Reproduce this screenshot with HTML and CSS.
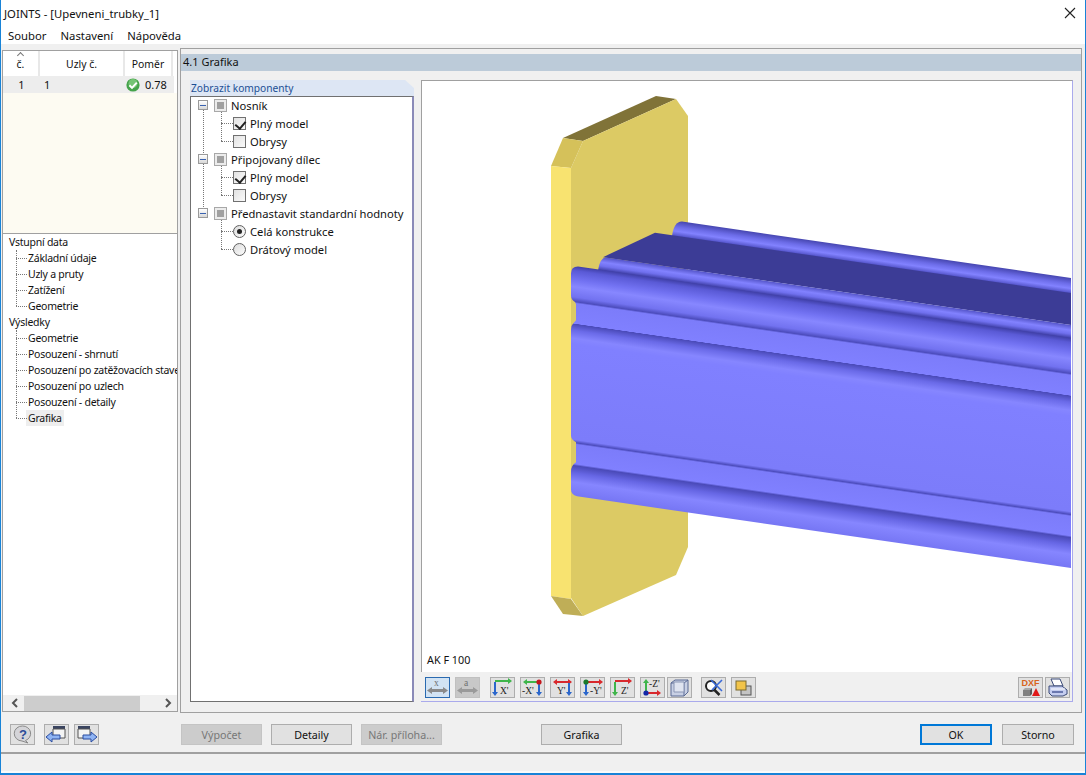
FILE: index.html
```html
<!DOCTYPE html>
<html lang="en">
<head>
    <meta charset="UTF-8">
    <meta name="viewport" content="width=device-width, initial-scale=1.0">
    <title>JOINTS</title>
    <link rel="stylesheet" href="styles.css">
</head>
<body>
    <div class="window">
        <div class="titlebar">
            <span>JOINTS - [Upevneni_trubky_1]</span>
            <svg class="close-icon" width="12" height="12" viewBox="0 0 12 12"><path d="M1 1l10 10M11 1L1 11" stroke="#222" stroke-width="1.1" fill="none"/></svg>
        </div>
        <div class="menubar">
            <span>Soubor</span>
            <span>Nastavení</span>
            <span>Nápověda</span>
        </div>

        <div class="workspace">
            <div class="side">
                <div class="results">
                    <div class="results-head">
                        <div class="cell cell-no">č.<i class="sort-mark"></i></div>
                        <div class="cell cell-nodes">Uzly č.</div>
                        <div class="cell cell-ratio">Poměr</div>
                    </div>
                    <div class="results-row">
                        <div class="cell cell-no">1</div>
                        <div class="cell cell-nodes cell-left">1</div>
                        <div class="cell cell-ratio">
                            <svg width="14" height="14" viewBox="0 0 14 14"><circle cx="7" cy="7" r="6.6" fill="#45a34b"/><circle cx="7" cy="5.5" r="4.5" fill="#74c474"/><path d="M3.4 7.2l2.6 2.7 4.8-5.3" stroke="#fff" stroke-width="2" fill="none"/></svg>
                            <span>0.78</span>
                        </div>
                    </div>
                </div>

                <div class="nav-tree">
                    <div class="nav-root">Vstupní data</div>
                    <div class="nav-group">
                        <div class="nav-item">Základní údaje</div>
                        <div class="nav-item">Uzly a pruty</div>
                        <div class="nav-item">Zatížení</div>
                        <div class="nav-item">Geometrie</div>
                    </div>
                    <div class="nav-root">Výsledky</div>
                    <div class="nav-group">
                        <div class="nav-item">Geometrie</div>
                        <div class="nav-item">Posouzení - shrnutí</div>
                        <div class="nav-item">Posouzení po zatěžovacích stavech</div>
                        <div class="nav-item">Posouzení po uzlech</div>
                        <div class="nav-item">Posouzení - detaily</div>
                        <div class="nav-item"><span class="nav-selected">Grafika</span></div>
                    </div>
                </div>

                <div class="hscroll">
                    <svg width="8" height="10" viewBox="0 0 8 10"><path d="M6 1L2 5l4 4" stroke="#555" stroke-width="2" fill="none"/></svg>
                    <div class="hscroll-track"><div class="hscroll-thumb"></div></div>
                    <svg width="8" height="10" viewBox="0 0 8 10"><path d="M2 1l4 4-4 4" stroke="#555" stroke-width="2" fill="none"/></svg>
                </div>
            </div>

            <div class="main">
                <div class="main-head">4.1 Grafika</div>
                <div class="main-body">
                    <div class="group">
                        <div class="group-tab">Zobrazit komponenty</div>
                        <div class="group-box">
                            <div class="comp-node">
                                <div class="comp-root"><i class="expander"></i><i class="tri-box"></i>Nosník</div>
                                <div class="comp-children">
                                    <div class="comp-item"><i class="check-box checked"></i>Plný model</div>
                                    <div class="comp-item"><i class="check-box"></i>Obrysy</div>
                                </div>
                            </div>
                            <div class="comp-node">
                                <div class="comp-root"><i class="expander"></i><i class="tri-box"></i>Připojovaný dílec</div>
                                <div class="comp-children">
                                    <div class="comp-item"><i class="check-box checked"></i>Plný model</div>
                                    <div class="comp-item"><i class="check-box"></i>Obrysy</div>
                                </div>
                            </div>
                            <div class="comp-node comp-last">
                                <div class="comp-root"><i class="expander"></i><i class="tri-box"></i>Přednastavit standardní hodnoty</div>
                                <div class="comp-children">
                                    <div class="comp-item"><i class="radio selected"></i>Celá konstrukce</div>
                                    <div class="comp-item"><i class="radio"></i>Drátový model</div>
                                </div>
                            </div>
                        </div>
                    </div>

                    <div class="view">
                        <svg class="model" width="650" height="570" viewBox="422 81 650 570">
                            <defs>
                                <linearGradient id="beam-front" gradientUnits="userSpaceOnUse" x1="0" y1="338" x2="0" y2="568">
                                    <stop offset="0" stop-color="#4040a8"/>
                                    <stop offset="0.02" stop-color="#5a5ad6"/>
                                    <stop offset="0.06" stop-color="#7272f2"/>
                                    <stop offset="0.09" stop-color="#8787ff"/>
                                    <stop offset="0.135" stop-color="#7272f0"/>
                                    <stop offset="0.155" stop-color="#4c4cbc"/>
                                    <stop offset="0.162" stop-color="#7c7cfa"/>
                                    <stop offset="0.25" stop-color="#8080ff"/>
                                    <stop offset="0.252" stop-color="#4a4ab8"/>
                                    <stop offset="0.28" stop-color="#6a6ae8"/>
                                    <stop offset="0.315" stop-color="#8686ff"/>
                                    <stop offset="0.34" stop-color="#8080ff"/>
                                    <stop offset="0.755" stop-color="#7c7cfa"/>
                                    <stop offset="0.768" stop-color="#4c4cbc"/>
                                    <stop offset="0.775" stop-color="#7c7cfa"/>
                                    <stop offset="0.86" stop-color="#8080ff"/>
                                    <stop offset="0.868" stop-color="#4a4ab8"/>
                                    <stop offset="0.9" stop-color="#6666e4"/>
                                    <stop offset="0.94" stop-color="#8686ff"/>
                                    <stop offset="1" stop-color="#7676f4"/>
                                </linearGradient>
                                <linearGradient id="beam-mid" gradientUnits="userSpaceOnUse" x1="0" y1="325" x2="0" y2="338">
                                    <stop offset="0" stop-color="#5454c8"/>
                                    <stop offset="0.4" stop-color="#8282ff"/>
                                    <stop offset="0.7" stop-color="#7070ee"/>
                                    <stop offset="1" stop-color="#4444ae"/>
                                </linearGradient>
                                <linearGradient id="beam-top" gradientUnits="userSpaceOnUse" x1="0" y1="278" x2="0" y2="293">
                                    <stop offset="0" stop-color="#4646b0"/>
                                    <stop offset="0.4" stop-color="#6c6ce8"/>
                                    <stop offset="0.7" stop-color="#8282ff"/>
                                    <stop offset="1" stop-color="#5656cc"/>
                                </linearGradient>
                            </defs>
                            <polygon points="563,138 656,96 676,99 583,141" fill="#807338"/>
                            <polygon points="583,141 676,99 688,116 688,547 676,575 583,616 571,598 571,168" fill="#dcca64"/>
                            <polygon points="563,138 583,141 571,168 551,166" fill="#d5c15a"/>
                            <polygon points="551,166 571,168 571,599 551,596" fill="#f8e370"/>
                            <polygon points="551,596 571,599 583,616 563,614" fill="#bfae57"/>
                            <g transform="matrix(1 .145 0 1 0 -155.3)">
                                <path d="M1071 278H682Q674 279 672 294H1071Z" fill="url(#beam-top)"/>
                                <path d="M1071 293H655L603 325H1071Z" fill="#3c3c96"/>
                                <path d="M1071 325H606Q600 326 598 339H1071Z" fill="url(#beam-mid)"/>
                                <path d="M1071 338H578Q571 339 571 346V368Q571 372 575 374L576 376V392L573 396Q571 398 571 402V508Q571 512 576 514V534Q571 538 571 544V562Q571 567 577 568H1071Z" fill="url(#beam-front)"/>
                            </g>
                        </svg>
                        <div class="view-label">AK F 100</div>
                        <div class="view-tools">
                            <button class="tool tool-active"><svg width="23" height="19" viewBox="0 0 23 19"><text x="8" y="8" class="tool-letter">x</text><path d="M3 12.5h17" stroke="#8a8a8a" stroke-width="3"/><path d="M1 12.5l5-3.5v7zM22 12.5l-5-3.5v7z" fill="#8a8a8a"/></svg></button>
                            <button class="tool tool-disabled"><svg width="23" height="19" viewBox="0 0 23 19"><text x="8" y="8" class="tool-letter">a</text><path d="M3 12.5h17" stroke="#9a9a9a" stroke-width="3"/><path d="M1 12.5l5-3.5v7zM22 12.5l-5-3.5v7z" fill="#9a9a9a"/></svg></button>
                            <span class="tool-gap"></span>
                            <button class="tool"><svg width="23" height="19" viewBox="0 0 23 19"><path d="M4 4v11" stroke="#2a66cc" stroke-width="2"/><path d="M1 14h6l-3 4z" fill="#2a66cc"/><path d="M4 3h14" stroke="#3fb54a" stroke-width="2"/><path d="M17 0v6l4-3z" fill="#3fb54a"/><text x="9" y="16" class="tool-letter">X'</text></svg></button>
                            <button class="tool"><svg width="23" height="19" viewBox="0 0 23 19"><path d="M18 4v11" stroke="#2a66cc" stroke-width="2"/><path d="M15 14h6l-3 4z" fill="#2a66cc"/><path d="M5 4h13" stroke="#3fb54a" stroke-width="2"/><path d="M6 1v6l-4-3z" fill="#3fb54a"/><circle cx="18" cy="4" r="2.6" fill="#c4161c"/><text x="1" y="16" class="tool-letter">-X'</text></svg></button>
                            <button class="tool"><svg width="23" height="19" viewBox="0 0 23 19"><path d="M4 4h15" stroke="#d8282c" stroke-width="2"/><path d="M6 1v6l-4-3zM17 1v6l4-3z" fill="#d8282c"/><path d="M18 5v10" stroke="#2a66cc" stroke-width="2"/><path d="M15 14h6l-3 4z" fill="#2a66cc"/><text x="6" y="16" class="tool-letter">Y'</text></svg></button>
                            <button class="tool"><svg width="23" height="19" viewBox="0 0 23 19"><path d="M5 4v11" stroke="#2a66cc" stroke-width="2"/><path d="M2 14h6l-3 4z" fill="#2a66cc"/><path d="M5 4h14" stroke="#d8282c" stroke-width="2"/><path d="M18 1v6l4-3z" fill="#d8282c"/><circle cx="5" cy="4" r="2.6" fill="#1a7a2a"/><text x="9" y="16" class="tool-letter">-Y'</text></svg></button>
                            <button class="tool"><svg width="23" height="19" viewBox="0 0 23 19"><path d="M4 4v11" stroke="#3fb54a" stroke-width="2"/><path d="M1 14h6l-3 4z" fill="#3fb54a"/><path d="M4 3h14" stroke="#d8282c" stroke-width="2"/><path d="M17 0v6l4-3z" fill="#d8282c"/><text x="10" y="16" class="tool-letter">Z'</text></svg></button>
                            <button class="tool"><svg width="23" height="19" viewBox="0 0 23 19"><path d="M5 4v11" stroke="#3fb54a" stroke-width="2"/><path d="M2 5h6l-3-4z" fill="#3fb54a"/><path d="M5 15h12" stroke="#d8282c" stroke-width="2"/><path d="M16 12v6l4-3z" fill="#d8282c"/><circle cx="5" cy="15" r="2.6" fill="#1226a8"/><text x="8" y="9" class="tool-letter">-Z'</text></svg></button>
                            <button class="tool tool-iso"><svg width="23" height="19" viewBox="0 0 23 19"><path d="M3 5l4-3h13v12l-4 4H3zM3 5h13v13M16 5l4-3" fill="#c8d0e4" stroke="#5a6a94"/><path d="M6 4h10v10H6z" fill="#dfe4f0" stroke="#8a96b4"/></svg></button>
                            <span class="tool-gap"></span>
                            <button class="tool"><svg width="23" height="19" viewBox="0 0 23 19"><circle cx="9" cy="8" r="5" fill="#fff" stroke="#222" stroke-width="2"/><path d="M12.5 12l5 5" stroke="#222" stroke-width="2.5"/><path d="M9 2l11 11M20 2L10 12" stroke="#3a6ad8" stroke-width="1.6"/></svg></button>
                            <button class="tool"><svg width="23" height="19" viewBox="0 0 23 19"><rect x="9" y="8" width="10" height="9" fill="#c4c4c4" stroke="#555"/><rect x="4" y="3" width="10" height="9" fill="#f2c44a" stroke="#7a6a30"/></svg></button>
                            <span class="tool-spacer"></span>
                            <button class="tool tool-dxf"><span>DXF</span><svg width="21" height="8" viewBox="0 0 21 8"><path d="M3 2h7v6H3z" fill="#808080"/><path d="M3 2l2-2h7l-2 2z" fill="#a8a8a8"/><path d="M10 2l2-2v6l-2 2z" fill="#5a5a5a"/><path d="M16 0l4 8h-8z" fill="#e01818"/></svg></button>
                            <button class="tool"><svg width="23" height="19" viewBox="0 0 23 19"><path d="M5 1h9l3 7H8z" fill="#fff" stroke="#3a4a78"/><path d="M3 8h13l5 4v4l-4 2H6l-3-3z" fill="#c4cdf0" stroke="#3a4a78"/><path d="M5 11h14" stroke="#fff"/><path d="M6 14h11" stroke="#6a78b0" stroke-width="2"/></svg></button>
                        </div>
                    </div>
                </div>
            </div>
        </div>

        <div class="footer">
            <button class="btn-icon"><svg width="23" height="19" viewBox="0 0 23 19"><path d="M11.5 1a8 7.5 0 0 1 3 14.5L17 18l-6-2a8 7.5 0 0 1 .5-15z" fill="#d4d4d8" stroke="#8a8a8a"/><text x="8" y="14" class="help-mark">?</text></svg></button>
            <button class="btn-icon btn-prev"><svg width="23" height="19" viewBox="0 0 23 19"><path d="M8 1h12v3H8z" fill="#3a4460"/><path d="M8 4h12v9H8z" fill="#f4f4f4" stroke="#555"/><path d="M1 12l6-5v3h8v4H7v3z" fill="#8fb4f4" stroke="#2a4ca0"/></svg></button>
            <button class="btn-icon btn-next"><svg width="23" height="19" viewBox="0 0 23 19"><path d="M3 1h12v3H3z" fill="#3a4460"/><path d="M3 4h12v9H3z" fill="#f4f4f4" stroke="#555"/><path d="M22 12l-6-5v3H8v4h8v3z" fill="#8fb4f4" stroke="#2a4ca0"/></svg></button>
            <button class="btn btn-disabled btn-calc">Výpočet</button>
            <button class="btn">Detaily</button>
            <button class="btn btn-disabled">Nár. příloha...</button>
            <button class="btn btn-graphics">Grafika</button>
            <button class="btn btn-wide btn-default">OK</button>
            <button class="btn btn-wide">Storno</button>
        </div>
        <div class="statusbar"></div>
    </div>
</body>
</html>
```

FILE: styles.css
```css
:root {
    --line-color: #a0a0a0;
    --edge-color: #aaaaec;
    --face-color: #f0f0f0;
    --window-blue: #1883d7;
}

* {
    box-sizing: border-box;
}

body {
    margin: 0;
    font-family: "Noto Sans", sans-serif;
    font-size: 11px;
    color: #111;
}

.window {
    display: flex;
    flex-direction: column;
    width: 1086px;
    height: 775px;
    background: var(--face-color);
    border: 1px solid var(--window-blue);
    border-top: none;
    border-bottom-width: 2px;
    overflow: hidden;
}

.titlebar {
    display: flex;
    justify-content: space-between;
    align-items: center;
    height: 26px;
    padding: 0 9px 0 3px;
    background: white;
    font-size: 11.3px;
}

.menubar {
    display: flex;
    align-items: center;
    gap: 14px;
    height: 18px;
    padding-left: 7px;
    background: white;
    font-size: 11.3px;
}

.workspace {
    display: flex;
    flex: none;
    height: 669px;
    padding: 4px 0 0 1px;
}

/* left column */
.side {
    display: flex;
    flex-direction: column;
    width: 176px;
    height: 662px;
    margin: 2px 2px 0 0;
    background: white;
    border: 1px solid var(--line-color);
}

.results {
    height: 183px;
    padding-right: 3px;
    border-bottom: 1px solid var(--line-color);
    background: linear-gradient(#fdfbf2, #fdfbf2) no-repeat 0 42px / 100% 100%;
}

.results-head, .results-row {
    display: grid;
    grid-template-columns: 37px 85px 48px;
}

.results-head {
    height: 25px;
    background: white;
    font-size: 10.4px;
}

.results-head .cell {
    position: relative;
    border-right: 2px solid #e8e8e8;
}

.results-row {
    height: 17px;
    background: #ededed;
}

.cell {
    display: flex;
    justify-content: center;
    align-items: center;
}

.cell-left {
    justify-content: flex-start;
    padding-left: 4px;
}

.results-row .cell-ratio {
    justify-content: flex-start;
    gap: 5px;
    padding-left: 1px;
}

.sort-mark {
    position: absolute;
    top: 2px;
    left: 15px;
    width: 5px;
    height: 5px;
    border-top: 1px solid #777;
    border-left: 1px solid #777;
    transform: rotate(45deg);
}

.nav-tree {
    flex: 1;
    min-height: 0;
    padding: 0 0 0 6px;
    font-size: 10.5px;
    letter-spacing: -0.25px;
    white-space: nowrap;
    overflow: hidden;
}

.nav-root, .nav-item {
    display: flex;
    align-items: center;
    height: 16px;
}

.nav-group {
    position: relative;
    padding-left: 19px;
}

.nav-group::before {
    content: "";
    position: absolute;
    top: 0;
    bottom: 8px;
    left: 7px;
    border-left: 1px dotted #777;
}

.nav-item {
    position: relative;
}

.nav-item::before {
    content: "";
    position: absolute;
    top: 8px;
    left: -12px;
    width: 11px;
    border-top: 1px dotted #777;
}

.nav-selected {
    margin-left: -2px;
    padding: 0 2px;
    line-height: 16px;
    background: #eeeeee;
}

.hscroll {
    display: flex;
    align-items: center;
    justify-content: space-between;
    height: 16px;
    padding: 0 5px 0 8px;
    background: var(--face-color);
}

.hscroll-track {
    flex: 1;
    height: 15px;
    padding: 0 24px 0 5px;
}

.hscroll-thumb {
    height: 15px;
    background: #cdcdcd;
}

/* right column */
.main {
    width: 902px;
    height: 665px;
    border: 1px solid var(--line-color);
}

.main-head {
    display: flex;
    align-items: center;
    height: 17px;
    margin-top: 5px;
    padding: 0 0 2px 2px;
    background: #bccbd9;
}

.main-body {
    display: flex;
    gap: 7px;
    padding: 9px 0 0 9px;
}

.group {
    width: 224px;
    height: 622px;
}

.group-tab {
    display: flex;
    align-items: center;
    height: 16px;
    padding-left: 1px;
    background: #dde6f4;
    color: #1c4f94;
    font-size: 10.2px;
    clip-path: polygon(0 0, 96% 0, 100% 50%, 100% 100%, 0 100%);
}

.group-box {
    height: 606px;
    padding-top: 0;
    background: white;
    border: 1px solid #707070;
    border-right: 2px solid #8a8ab8;
    font-size: 11.2px;
}

.comp-node {
    position: relative;
    top: -1px;
}

.comp-node::before {
    content: "";
    position: absolute;
    top: 9px;
    bottom: -9px;
    left: 12px;
    border-left: 1px dotted #777;
}

.comp-last::before {
    display: none;
}

.comp-root, .comp-item {
    position: relative;
    display: flex;
    align-items: center;
    height: 18px;
}

.comp-root {
    padding-left: 7px;
}

.expander {
    position: relative;
    z-index: 1;
    flex: none;
    width: 10px;
    height: 10px;
    margin-right: 6px;
    background: linear-gradient(#ffffff, #d8d8d8);
    border: 1px solid #9a9a9a;
}

.expander::after {
    content: "";
    position: absolute;
    top: 4px;
    left: 1px;
    width: 6px;
    height: 1px;
    background: #3a62b0;
}

.tri-box {
    flex: none;
    width: 13px;
    height: 13px;
    margin-right: 4px;
    background: #a0a0a0;
    border: 1px solid #a8a8a8;
    box-shadow: inset 0 0 0 2px #ececec;
}

.comp-children {
    position: relative;
    margin-left: 30px;
    padding-left: 12px;
}

.comp-children::before {
    content: "";
    position: absolute;
    top: -2px;
    bottom: 9px;
    left: 0;
    border-left: 1px dotted #777;
}

.comp-item::before {
    content: "";
    position: absolute;
    top: 9px;
    left: -12px;
    width: 12px;
    border-top: 1px dotted #777;
}

.check-box {
    position: relative;
    flex: none;
    width: 13px;
    height: 13px;
    margin-right: 4px;
    background: linear-gradient(135deg, #e2e2e2, #fafafa);
    border: 1px solid #707070;
}

.check-box.checked::after {
    content: "";
    position: absolute;
    top: 1px;
    left: 3px;
    width: 5px;
    height: 8px;
    border-right: 2px solid #222;
    border-bottom: 2px solid #222;
    transform: rotate(40deg);
}

.radio {
    position: relative;
    flex: none;
    width: 13px;
    height: 13px;
    margin-right: 4px;
    background: linear-gradient(135deg, #dcdcdc, #fcfcfc);
    border: 1px solid #606060;
    border-radius: 50%;
}

.radio.selected::after {
    content: "";
    position: absolute;
    top: 3px;
    left: 3px;
    width: 5px;
    height: 5px;
    background: #222;
    border-radius: 50%;
}

.view {
    display: flex;
    flex-direction: column;
    width: 652px;
    height: 622px;
    background: white;
    border: 1px solid var(--edge-color);
    border-top-color: var(--line-color);
    border-left: none;
    box-shadow: inset 1px 0 0 var(--line-color);
}

.model {
    display: block;
    flex: none;
    margin-left: 1px;
}

.view-label {
    display: flex;
    align-items: center;
    height: 21px;
    padding: 0 0 4px 6px;
    font-size: 10.8px;
}

.view-tools {
    display: flex;
    gap: 5px;
    height: 29px;
    padding: 5px 0 0 4px;
    background: var(--face-color);
}

.tool {
    display: flex;
    flex: none;
    justify-content: center;
    align-items: center;
    width: 25px;
    height: 21px;
    padding: 0;
    background: #e1e1e1;
    border: 1px solid #adadad;
}

.tool-active {
    background: #d2e3f3;
    border-color: #2a6ab0;
}

.tool-disabled {
    background: #c8c8c8;
    border-color: #c0c0c0;
}

.tool-gap {
    flex: none;
    width: 0;
}

.tool-iso {
    margin-left: -3px;
}

.tool-iso + .tool-gap {
    margin-left: -1px;
}

.tool-spacer {
    flex: 1;
}

.tool-dxf {
    flex-direction: column;
    color: #d8641c;
    font-family: "Liberation Sans", sans-serif;
    font-size: 9px;
    font-weight: bold;
    line-height: 9px;
}

.tool-dxf + .tool {
    margin: 0 2px 0 -3px;
}

.tool-letter {
    font-family: "Liberation Serif", serif;
    font-size: 9.5px;
    fill: #222;
}

.tool-disabled .tool-letter, .tool-active .tool-letter {
    fill: #707070;
}

.help-mark {
    font-family: "Liberation Sans", sans-serif;
    font-size: 13px;
    font-weight: bold;
    fill: #2c4c98;
}

/* buttons along the bottom */
.footer {
    display: flex;
    flex: none;
    align-items: flex-start;
    height: 39px;
    padding: 11px 0 0 9px;
}

.btn-icon {
    display: flex;
    justify-content: center;
    align-items: center;
    width: 25px;
    height: 21px;
    padding: 0;
    background: #e1e1e1;
    border: 1px solid #adadad;
}

.btn-prev {
    margin-left: 9px;
}

.btn-next {
    margin-left: 5px;
}

.btn {
    width: 81px;
    height: 21px;
    margin-left: 9px;
    padding: 0;
    background: #e1e1e1;
    border: 1px solid #adadad;
    color: #111;
    font-family: inherit;
    font-size: 10.7px;
}

.btn-disabled {
    background: #cccccc;
    border-color: #c4c4c4;
    color: #777;
}

.btn-calc {
    margin-left: 82px;
}

.btn-graphics {
    margin-left: 99px;
}

.btn-wide {
    width: 72px;
    margin-left: 10px;
}

.btn-default {
    margin-left: 298px;
    border: 2px solid #0078d7;
}

.statusbar {
    flex: 1;
    border-top: 2px solid var(--line-color);
    border-bottom: 2px solid #fafafa;
}
```
